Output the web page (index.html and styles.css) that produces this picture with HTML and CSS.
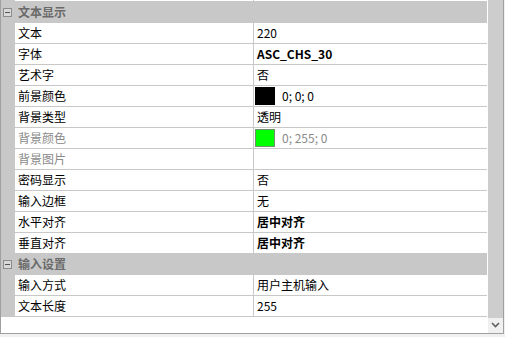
FILE: index.html
```html
<!DOCTYPE html>
<html lang="zh-CN">
<head>
    <meta charset="UTF-8">
    <title>属性</title>
    <link rel="stylesheet" href="styles.css">
</head>
<body>
    <div class="prop-grid">
        <div class="rows">
            <div class="cut"><span class="gutter"></span><span class="cell-name"></span><span class="cell-value"></span></div>

            <div class="category"><span class="toggle"></span><span class="cat-title">文本显示</span></div>
            <div class="row"><span class="gutter"></span><span class="cell-name">文本</span><span class="cell-value">220</span></div>
            <div class="row"><span class="gutter"></span><span class="cell-name">字体</span><span class="cell-value bold">ASC_CHS_30</span></div>
            <div class="row"><span class="gutter"></span><span class="cell-name">艺术字</span><span class="cell-value">否</span></div>
            <div class="row"><span class="gutter"></span><span class="cell-name">前景颜色</span><span class="cell-value swatch-cell"><i class="swatch black"></i>0; 0; 0</span></div>
            <div class="row"><span class="gutter"></span><span class="cell-name">背景类型</span><span class="cell-value">透明</span></div>
            <div class="row disabled"><span class="gutter"></span><span class="cell-name">背景颜色</span><span class="cell-value swatch-cell"><i class="swatch green"></i>0; 255; 0</span></div>
            <div class="row disabled"><span class="gutter"></span><span class="cell-name">背景图片</span><span class="cell-value"></span></div>
            <div class="row"><span class="gutter"></span><span class="cell-name">密码显示</span><span class="cell-value">否</span></div>
            <div class="row"><span class="gutter"></span><span class="cell-name">输入边框</span><span class="cell-value">无</span></div>
            <div class="row"><span class="gutter"></span><span class="cell-name">水平对齐</span><span class="cell-value bold">居中对齐</span></div>
            <div class="row"><span class="gutter"></span><span class="cell-name">垂直对齐</span><span class="cell-value bold">居中对齐</span></div>

            <div class="category"><span class="toggle"></span><span class="cat-title">输入设置</span></div>
            <div class="row"><span class="gutter"></span><span class="cell-name">输入方式</span><span class="cell-value">用户主机输入</span></div>
            <div class="row"><span class="gutter"></span><span class="cell-name">文本长度</span><span class="cell-value">255</span></div>
        </div>

        <div class="scrollbar">
            <div class="thumb"></div>
            <div class="arrow">
                <svg width="9" height="6" viewBox="0 0 9 6"><path d="M1 1 L4.5 4.5 L8 1" fill="none" stroke="#606060" stroke-width="1.6"/></svg>
            </div>
        </div>
    </div>
</body>
</html>
```

FILE: styles.css
```css
:root {
  --clr-line: #c8c8c8;
  --clr-cat: #c8c8c8;
  --clr-cat-text: #6a6a6a;
  --clr-disabled: #8a8a8a;
  --clr-frame: #a0a0a0;
  --clr-window: #f0f0f0;
}

*,
::after,
::before {
  margin: 0;
  padding: 0;
  box-sizing: border-box;
}

body {
  background: var(--clr-window);
  font-family: "Noto Sans CJK SC", "Noto Sans", sans-serif;
  font-size: 12px;
  color: #000;
}

.prop-grid {
  display: flex;
  width: 504px;
  height: 334px;
  background: #fff;
  border: 1px solid var(--clr-frame);
  border-top: none;
}

.rows {
  width: 486px;
  display: flex;
  flex-direction: column;
}

.cut,
.row {
  display: flex;
  height: 21px;
}

.cut {
  height: 2px;
}

.gutter {
  width: 14px;
  flex: none;
  background: var(--clr-cat);
}

.cell-name,
.cell-value {
  display: flex;
  align-items: center;
  border-bottom: 1px solid var(--clr-line);
  padding-left: 3px;
  line-height: 1;
  white-space: nowrap;
}

.cell-name {
  width: 239px;
  flex: none;
  border-right: 1px solid var(--clr-line);
}

.cell-value {
  flex: 1;
}

.bold {
  font-weight: 700;
}

.disabled .cell-name,
.disabled .cell-value {
  color: var(--clr-disabled);
}

.swatch-cell {
  padding-left: 1px;
}

.swatch {
  display: block;
  width: 20px;
  height: 18px;
  margin-right: 7px;
}

.swatch.black {
  background: #000;
}

.swatch.green {
  background: #00ff00;
  border: 1px solid #6f8f6f;
}

.category {
  display: flex;
  align-items: center;
  height: 21px;
  background: var(--clr-cat);
  border-bottom: 1px solid var(--clr-cat);
}

.toggle {
  position: relative;
  width: 9px;
  height: 9px;
  margin: 0 6px 0 2px;
  border: 1px solid #8c8c8c;
  background: #d8d8d8;
}

.toggle::after {
  content: "";
  position: absolute;
  left: 1px;
  top: 3px;
  width: 5px;
  height: 1px;
  background: #555;
}

.cat-title {
  font-weight: 700;
  color: var(--clr-cat-text);
  line-height: 1;
}

.scrollbar {
  width: 16px;
  display: flex;
  flex-direction: column;
  background: var(--clr-window);
  border-left: 1px solid #fff;
}

.thumb {
  height: 318px;
  background: #cdcdcd;
}

.arrow {
  flex: 1;
  display: flex;
  justify-content: center;
  padding-top: 4px;
}
```
